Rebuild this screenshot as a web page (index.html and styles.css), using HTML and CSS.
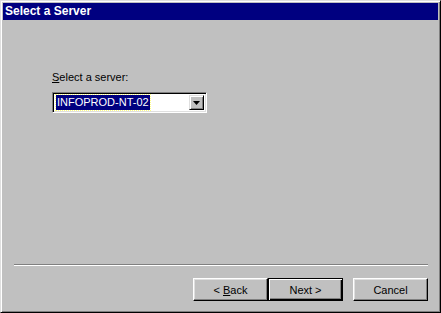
FILE: index.html
```html
<!DOCTYPE html>
<html lang="en">
  <head>
    <meta charset="UTF-8" />
    <meta name="viewport" content="width=device-width, initial-scale=1.0" />
    <title>Select a Server</title>
    <link rel="stylesheet" href="styles.css">
  </head>
  <body>
    <div class="window">
      <div class="titlebar">Select a Server</div>
      <div class="content">
        <div class="main">
          <label class="label"><u>S</u>elect a server:</label>
          <div class="combo">
            <div class="combo-text"><span class="selected">INFOPROD-NT-02</span></div>
            <div class="combo-btn">
              <svg width="7" height="4" viewBox="0 0 7 4"><path d="M0 0h7L3.5 4z" fill="#000"/></svg>
            </div>
          </div>
        </div>
        <!-- 아래 버튼 줄 -->
        <div class="footer">
          <div class="separator"></div>
          <div class="buttons">
            <button class="btn">&lt; <u>B</u>ack</button>
            <button class="btn default">Next &gt;</button>
            <button class="btn cancel">Cancel</button>
          </div>
        </div>
      </div>
    </div>
  </body>
</html>
```

FILE: styles.css
```css
* {
  margin: 0;
  padding: 0;
  box-sizing: border-box;
}
body {
  background: #c0c0c0;
  font-family: "Liberation Sans", Arial, sans-serif;
  font-size: 11px;
}
.window {
  width: 441px;
  height: 313px;
  background: #c0c0c0;
  border: 1px solid;
  border-color: #dfdfdf #000 #000 #dfdfdf;
  box-shadow: inset 1px 1px #fff, inset -1px -1px #808080;
  padding: 2px;
  display: flex;
  flex-direction: column;
}
.titlebar {
  height: 17px;
  background: #000080;
  color: #fff;
  font-weight: bold;
  font-size: 12px;
  line-height: 17px;
  padding-left: 2px;
}
.content {
  flex: 1;
  display: flex;
  flex-direction: column;
}
.main {
  flex: 1;
  padding: 51px 0 0 49px;
}
.label {
  display: block;
  line-height: 13px;
  color: #000;
}
.combo {
  margin-top: 8px;
  width: 155px;
  height: 21px;
  display: flex;
  border: 1px solid;
  border-color: #808080 #fff #fff #808080;
  box-shadow: inset 1px 1px #000, inset -1px -1px #dfdfdf;
  background: #fff;
  padding: 2px;
}
.combo-text {
  flex: 1;
  padding-left: 1px;
  display: flex;
  align-items: center;
}
.selected {
  background: #000080;
  color: #fff;
  outline: 1px dotted #ffff80;
  font-size: 11px;
  line-height: 15px;
  padding: 0 1px;
}
.combo-btn {
  width: 15px;
  background: #c0c0c0;
  border: 1px solid;
  border-color: #dfdfdf #000 #000 #dfdfdf;
  box-shadow: inset 1px 1px #fff, inset -1px -1px #808080;
  display: flex;
  align-items: center;
  justify-content: center;
}
.footer {
  padding: 0 10px 9px 11px;
}
.separator {
  border-top: 1px solid #808080;
  border-bottom: 1px solid #fff;
}
.buttons {
  display: flex;
  justify-content: flex-end;
  margin-top: 12px;
}
.btn {
  width: 75px;
  height: 23px;
  font-family: "Liberation Sans", Arial, sans-serif;
  font-size: 11px;
  color: #000;
  background: #c0c0c0;
  border: 1px solid;
  border-color: #fff #000 #000 #fff;
  box-shadow: inset -1px -1px #808080, inset 1px 1px #dfdfdf;
}
.btn.default {
  border-color: #000;
  box-shadow: inset 1px 1px #fff, inset -1px -1px #000, inset -2px -2px #808080;
}
.btn.cancel {
  margin-left: 10px;
}
```
